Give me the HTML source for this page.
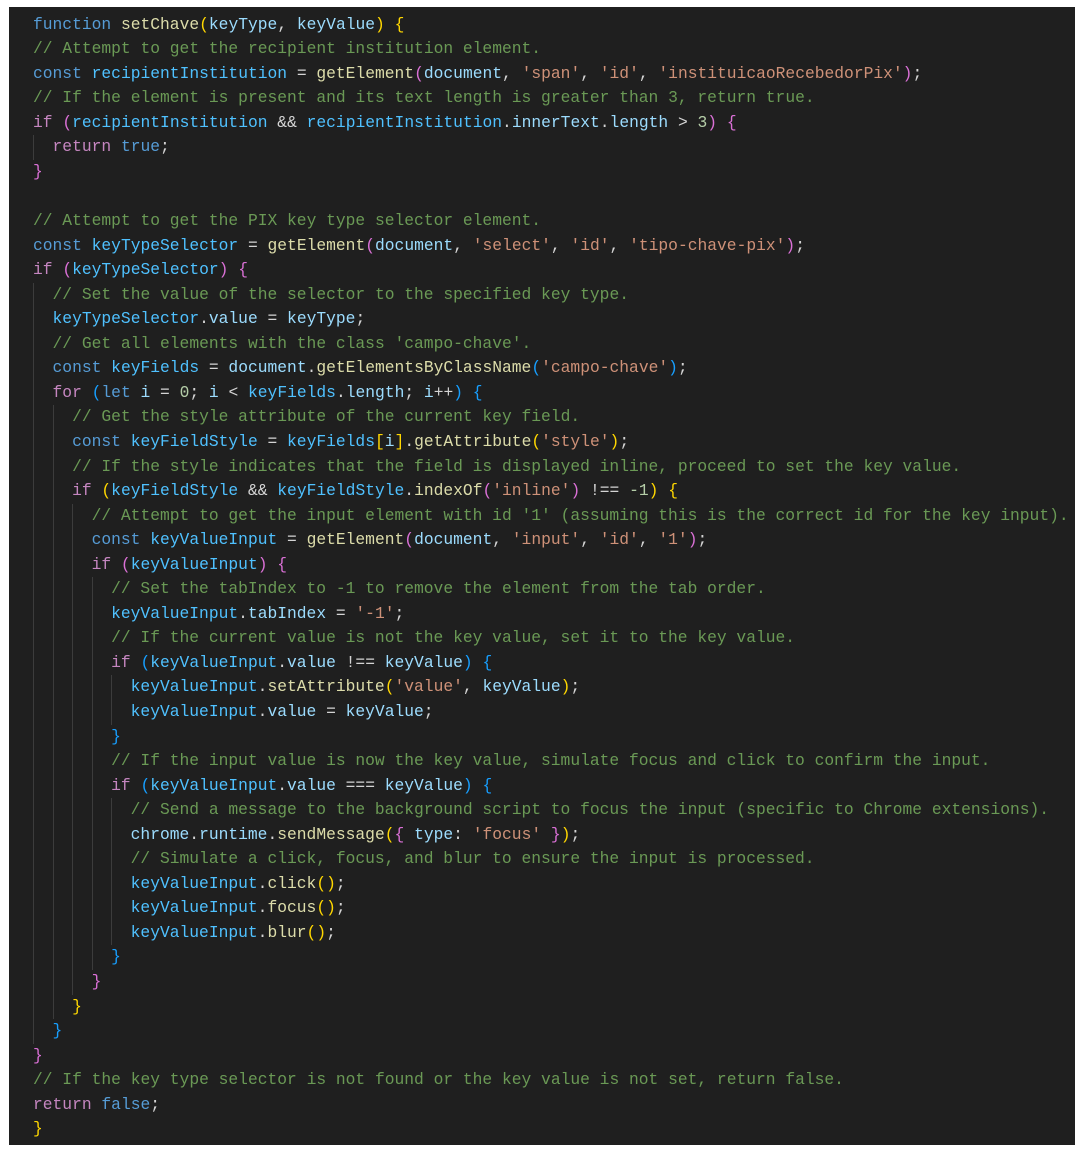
<!DOCTYPE html>
<html><head><meta charset="utf-8"><style>
html,body{margin:0;padding:0;background:#fff;width:1081px;height:1152px;overflow:hidden}
#ed{position:absolute;left:9px;top:7px;width:1066px;height:1138px;background:#1f1f1f;overflow:hidden}
#code{position:absolute;left:24px;top:5.7px;font-family:"Liberation Mono",monospace;font-size:16.3px;line-height:24.56px;color:#d4d4d4;white-space:normal}
.l{height:24.56px;white-space:pre}
.g{display:inline-block;width:2ch;box-shadow:inset 1px 0 0 #3c3c3c;height:24.56px;vertical-align:top}
.k{color:#569cd6}.c{color:#c586c0}.f{color:#dcdcaa}.v{color:#9cdcfe}.C{color:#4fc1ff}.s{color:#ce9178}.n{color:#b5cea8}.m{color:#6a9955}
.b1{color:#ffd700}.b2{color:#da70d6}.b3{color:#179fff}
</style></head><body><div id="ed"><div id="code"><div class="l"><span class="k">function</span> <span class="f">setChave</span><span class="b1">(</span><span class="v">keyType</span>, <span class="v">keyValue</span><span class="b1">)</span> <span class="b1">{</span></div><div class="l"><span class="m">// Attempt to get the recipient institution element.</span></div><div class="l"><span class="k">const</span> <span class="C">recipientInstitution</span> = <span class="f">getElement</span><span class="b2">(</span><span class="v">document</span>, <span class="s">'span'</span>, <span class="s">'id'</span>, <span class="s">'instituicaoRecebedorPix'</span><span class="b2">)</span>;</div><div class="l"><span class="m">// If the element is present and its text length is greater than 3, return true.</span></div><div class="l"><span class="c">if</span> <span class="b2">(</span><span class="C">recipientInstitution</span> &amp;&amp; <span class="C">recipientInstitution</span>.<span class="v">innerText</span>.<span class="v">length</span> &gt; <span class="n">3</span><span class="b2">)</span> <span class="b2">{</span></div><div class="l"><span class="g"></span><span class="c">return</span> <span class="k">true</span>;</div><div class="l"><span class="b2">}</span></div><div class="l"> </div><div class="l"><span class="m">// Attempt to get the PIX key type selector element.</span></div><div class="l"><span class="k">const</span> <span class="C">keyTypeSelector</span> = <span class="f">getElement</span><span class="b2">(</span><span class="v">document</span>, <span class="s">'select'</span>, <span class="s">'id'</span>, <span class="s">'tipo-chave-pix'</span><span class="b2">)</span>;</div><div class="l"><span class="c">if</span> <span class="b2">(</span><span class="C">keyTypeSelector</span><span class="b2">)</span> <span class="b2">{</span></div><div class="l"><span class="g"></span><span class="m">// Set the value of the selector to the specified key type.</span></div><div class="l"><span class="g"></span><span class="C">keyTypeSelector</span>.<span class="v">value</span> = <span class="v">keyType</span>;</div><div class="l"><span class="g"></span><span class="m">// Get all elements with the class 'campo-chave'.</span></div><div class="l"><span class="g"></span><span class="k">const</span> <span class="C">keyFields</span> = <span class="v">document</span>.<span class="f">getElementsByClassName</span><span class="b3">(</span><span class="s">'campo-chave'</span><span class="b3">)</span>;</div><div class="l"><span class="g"></span><span class="c">for</span> <span class="b3">(</span><span class="k">let</span> <span class="v">i</span> = <span class="n">0</span>; <span class="v">i</span> &lt; <span class="C">keyFields</span>.<span class="v">length</span>; <span class="v">i</span>++<span class="b3">)</span> <span class="b3">{</span></div><div class="l"><span class="g"></span><span class="g"></span><span class="m">// Get the style attribute of the current key field.</span></div><div class="l"><span class="g"></span><span class="g"></span><span class="k">const</span> <span class="C">keyFieldStyle</span> = <span class="C">keyFields</span><span class="b1">[</span><span class="v">i</span><span class="b1">]</span>.<span class="f">getAttribute</span><span class="b1">(</span><span class="s">'style'</span><span class="b1">)</span>;</div><div class="l"><span class="g"></span><span class="g"></span><span class="m">// If the style indicates that the field is displayed inline, proceed to set the key value.</span></div><div class="l"><span class="g"></span><span class="g"></span><span class="c">if</span> <span class="b1">(</span><span class="C">keyFieldStyle</span> &amp;&amp; <span class="C">keyFieldStyle</span>.<span class="f">indexOf</span><span class="b2">(</span><span class="s">'inline'</span><span class="b2">)</span> !== <span class="n">-1</span><span class="b1">)</span> <span class="b1">{</span></div><div class="l"><span class="g"></span><span class="g"></span><span class="g"></span><span class="m">// Attempt to get the input element with id '1' (assuming this is the correct id for the key input).</span></div><div class="l"><span class="g"></span><span class="g"></span><span class="g"></span><span class="k">const</span> <span class="C">keyValueInput</span> = <span class="f">getElement</span><span class="b2">(</span><span class="v">document</span>, <span class="s">'input'</span>, <span class="s">'id'</span>, <span class="s">'1'</span><span class="b2">)</span>;</div><div class="l"><span class="g"></span><span class="g"></span><span class="g"></span><span class="c">if</span> <span class="b2">(</span><span class="C">keyValueInput</span><span class="b2">)</span> <span class="b2">{</span></div><div class="l"><span class="g"></span><span class="g"></span><span class="g"></span><span class="g"></span><span class="m">// Set the tabIndex to -1 to remove the element from the tab order.</span></div><div class="l"><span class="g"></span><span class="g"></span><span class="g"></span><span class="g"></span><span class="C">keyValueInput</span>.<span class="v">tabIndex</span> = <span class="s">'-1'</span>;</div><div class="l"><span class="g"></span><span class="g"></span><span class="g"></span><span class="g"></span><span class="m">// If the current value is not the key value, set it to the key value.</span></div><div class="l"><span class="g"></span><span class="g"></span><span class="g"></span><span class="g"></span><span class="c">if</span> <span class="b3">(</span><span class="C">keyValueInput</span>.<span class="v">value</span> !== <span class="v">keyValue</span><span class="b3">)</span> <span class="b3">{</span></div><div class="l"><span class="g"></span><span class="g"></span><span class="g"></span><span class="g"></span><span class="g"></span><span class="C">keyValueInput</span>.<span class="f">setAttribute</span><span class="b1">(</span><span class="s">'value'</span>, <span class="v">keyValue</span><span class="b1">)</span>;</div><div class="l"><span class="g"></span><span class="g"></span><span class="g"></span><span class="g"></span><span class="g"></span><span class="C">keyValueInput</span>.<span class="v">value</span> = <span class="v">keyValue</span>;</div><div class="l"><span class="g"></span><span class="g"></span><span class="g"></span><span class="g"></span><span class="b3">}</span></div><div class="l"><span class="g"></span><span class="g"></span><span class="g"></span><span class="g"></span><span class="m">// If the input value is now the key value, simulate focus and click to confirm the input.</span></div><div class="l"><span class="g"></span><span class="g"></span><span class="g"></span><span class="g"></span><span class="c">if</span> <span class="b3">(</span><span class="C">keyValueInput</span>.<span class="v">value</span> === <span class="v">keyValue</span><span class="b3">)</span> <span class="b3">{</span></div><div class="l"><span class="g"></span><span class="g"></span><span class="g"></span><span class="g"></span><span class="g"></span><span class="m">// Send a message to the background script to focus the input (specific to Chrome extensions).</span></div><div class="l"><span class="g"></span><span class="g"></span><span class="g"></span><span class="g"></span><span class="g"></span><span class="v">chrome</span>.<span class="v">runtime</span>.<span class="f">sendMessage</span><span class="b1">(</span><span class="b2">{</span> <span class="v">type</span>: <span class="s">'focus'</span> <span class="b2">}</span><span class="b1">)</span>;</div><div class="l"><span class="g"></span><span class="g"></span><span class="g"></span><span class="g"></span><span class="g"></span><span class="m">// Simulate a click, focus, and blur to ensure the input is processed.</span></div><div class="l"><span class="g"></span><span class="g"></span><span class="g"></span><span class="g"></span><span class="g"></span><span class="C">keyValueInput</span>.<span class="f">click</span><span class="b1">()</span>;</div><div class="l"><span class="g"></span><span class="g"></span><span class="g"></span><span class="g"></span><span class="g"></span><span class="C">keyValueInput</span>.<span class="f">focus</span><span class="b1">()</span>;</div><div class="l"><span class="g"></span><span class="g"></span><span class="g"></span><span class="g"></span><span class="g"></span><span class="C">keyValueInput</span>.<span class="f">blur</span><span class="b1">()</span>;</div><div class="l"><span class="g"></span><span class="g"></span><span class="g"></span><span class="g"></span><span class="b3">}</span></div><div class="l"><span class="g"></span><span class="g"></span><span class="g"></span><span class="b2">}</span></div><div class="l"><span class="g"></span><span class="g"></span><span class="b1">}</span></div><div class="l"><span class="g"></span><span class="b3">}</span></div><div class="l"><span class="b2">}</span></div><div class="l"><span class="m">// If the key type selector is not found or the key value is not set, return false.</span></div><div class="l"><span class="c">return</span> <span class="k">false</span>;</div><div class="l"><span class="b1">}</span></div></div></div></body></html>
